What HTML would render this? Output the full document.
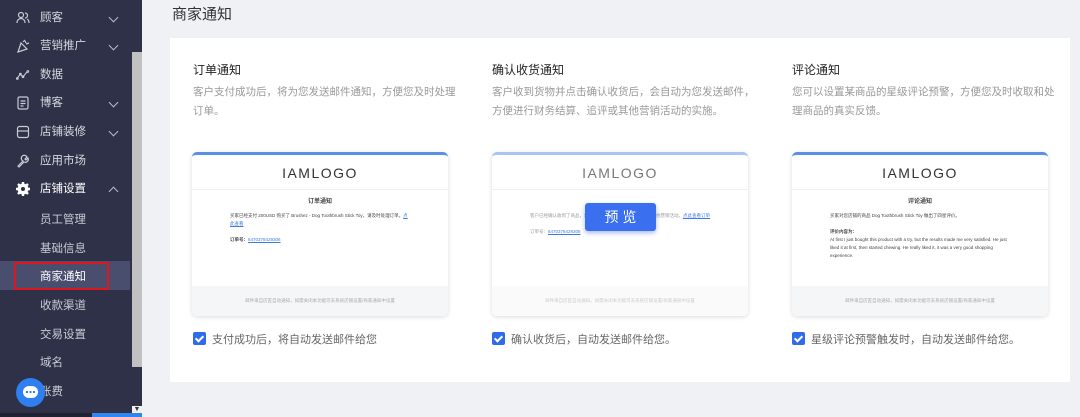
<!DOCTYPE html>
<html><head><meta charset="utf-8"><style>
*{margin:0;padding:0;box-sizing:border-box}
body{width:1080px;height:417px;overflow:hidden;background:#f0f1f5;font-family:"Liberation Sans","Noto Sans CJK SC",sans-serif;position:relative}
.sb{position:absolute;left:0;top:0;width:130px;height:417px;background:#2e3147}
.scr{position:absolute;left:130px;top:0;width:12px;height:417px;background:#2e3147}
.scr i{position:absolute;left:2px;top:52px;width:10px;height:315px;background:#c1c1c1}
.it{position:absolute;left:0;width:130px;height:28px;color:#d6d8e0;font-size:11.5px;line-height:28px}
.it .ic{position:absolute;left:16px;top:7px;width:14px;height:14px}
.it .t{position:absolute;left:40px}
.it .ar{position:absolute;left:110px;top:10px;width:7px;height:7px;border-right:1.5px solid #b8bbc8;border-bottom:1.5px solid #b8bbc8;transform:rotate(45deg)}
.it .up{transform:rotate(-135deg);top:13px}
.sub{position:absolute;left:40px;color:#c9cbd6;font-size:11.5px}
.sel{position:absolute;left:0;top:261px;width:130px;height:29px;background:#4a4e6e}
.red{position:absolute;left:14px;top:262px;width:95px;height:28px;border:2px solid #e0161e}
.panel{position:absolute;left:170px;top:38px;width:900px;height:344px;background:#fff}
h1{position:absolute;left:172px;top:3px;font-size:15px;font-weight:normal;color:#333}
.col{position:absolute;top:62px}
.col h3{font-size:12px;font-weight:normal;color:#222;line-height:16px}
.col p{margin-top:5px;font-size:10.5px;color:#999;line-height:19px}
.card{position:absolute;top:152px;width:256px;height:164px;border-radius:5px;background:#fff;box-shadow:0 1px 5px rgba(0,0,0,.15);border-top:3px solid #5b8fe6;overflow:hidden}
.logo{height:35px;border-bottom:1px solid #eef0f4;text-align:center;font-size:14px;letter-spacing:1.5px;line-height:36px;color:#333}
.cb{padding:8px 38px 0 38px;font-size:4.5px;color:#444;line-height:8px}
.cb .tt{text-align:center;font-size:6px;font-weight:bold;margin-bottom:6px}
.cb a{color:#3b7be8;text-decoration:underline}
.ft{position:absolute;left:0;bottom:0;width:100%;height:30px;background:#f5f6f8;font-size:4.5px;color:#aaa;text-align:center;line-height:30px}
.chk{position:absolute;top:332px;font-size:11px;color:#666;line-height:14px}
.chk b{display:inline-block;width:13px;height:13px;background:#2f6bea;border-radius:2px;vertical-align:-2px;margin-right:6px;position:relative}
.chk b:after{content:"";position:absolute;left:4px;top:1.5px;width:3px;height:6px;border-right:2px solid #fff;border-bottom:2px solid #fff;transform:rotate(45deg)}
.btn{position:absolute;left:585px;top:203px;width:71px;height:28px;background:#3a6ff0;border-radius:3px;color:#fff;font-size:14px;text-align:center;line-height:28px;box-shadow:0 2px 5px rgba(40,80,200,.4)}
</style></head><body>
<div class="sb">
<div class="it" style="top:4px"><svg class="ic" viewBox="0 0 14 14" fill="none" stroke="#c9cbd6" stroke-width="1.2"><circle cx="5" cy="4" r="2.5"/><path d="M1 12c0-3 2-4.5 4-4.5s4 1.5 4 4.5M9 2a2.5 2.5 0 010 5M11 8c1.5.7 2 2 2 4"/></svg><span class="t">顾客</span><span class="ar"></span></div>
<div class="it" style="top:32px"><svg class="ic" viewBox="0 0 14 14" fill="none" stroke="#c9cbd6" stroke-width="1.2"><path d="M2 13L5 4l6 6zM7 3l2-2M10 5l3-1M9 2l1 2"/></svg><span class="t">营销推广</span><span class="ar"></span></div>
<div class="it" style="top:61px"><svg class="ic" viewBox="0 0 16 14" fill="none" stroke="#c9cbd6" stroke-width="1.2"><path d="M1 11l4-5 3 3 5-6"/><circle cx="1.5" cy="11" r="1"/><circle cx="5" cy="6" r="1"/><circle cx="8" cy="9" r="1"/><circle cx="13.5" cy="3" r="1"/></svg><span class="t">数据</span></div>
<div class="it" style="top:89px"><svg class="ic" viewBox="0 0 14 14" fill="none" stroke="#c9cbd6" stroke-width="1.2"><rect x="2" y="1" width="10" height="12" rx="1.5"/><path d="M4.5 5h5M4.5 7.5h5M4.5 10h3"/></svg><span class="t">博客</span><span class="ar"></span></div>
<div class="it" style="top:118px"><svg class="ic" viewBox="0 0 14 14" fill="none" stroke="#c9cbd6" stroke-width="1.2"><rect x="1.5" y="1.5" width="11" height="11" rx="2"/><path d="M1.5 6h11"/></svg><span class="t">店铺装修</span><span class="ar"></span></div>
<div class="it" style="top:147px"><svg class="ic" viewBox="0 0 14 14" fill="none" stroke="#c9cbd6" stroke-width="1.2"><path d="M2 12l5-5a3 3 0 114-4l-2 2 1 1 2-2a3 3 0 01-4 4l-5 5z"/></svg><span class="t">应用市场</span></div>
<div class="it" style="top:175px;color:#fff"><svg class="ic" viewBox="0 0 14 14"><circle cx="7" cy="7" r="5.5" fill="#fff"/><g stroke="#fff" stroke-width="2.4"><path d="M7 0v14M0 7h14M2 2l10 10M12 2L2 12"/></g><circle cx="7" cy="7" r="2" fill="#2e3147"/></svg><span class="t">店铺设置</span><span class="ar up"></span></div>
<div class="sub" style="top:211px">员工管理</div>
<div class="sub" style="top:240px">基础信息</div>
<div class="sel"></div>
<div class="sub" style="top:268px;color:#fff">商家通知</div>
<div class="red"></div>
<div class="sub" style="top:297px">收款渠道</div>
<div class="sub" style="top:326px">交易设置</div>
<div class="sub" style="top:354px">域名</div>
<div class="sub" style="top:383px">账费</div>
<div style="position:absolute;left:16px;top:378px;width:29px;height:29px;border-radius:50%;background:#2f7ff0"><div style="position:absolute;left:7px;top:8px;width:15px;height:12px;border-radius:6px;background:#fff"></div><div style="position:absolute;left:10px;top:13px;width:9px;height:2px;background:linear-gradient(90deg,#2f7ff0 2px,#fff 2px,#fff 3.5px,#2f7ff0 3.5px,#2f7ff0 5.5px,#fff 5.5px,#fff 7px,#2f7ff0 7px)"></div></div>
</div>
<div class="scr"><i></i><div style="position:absolute;left:2px;top:406px;font-size:7px;color:#333;background:#f0f0f0;width:10px;height:11px;text-align:center">▼</div></div>
<div style="position:absolute;left:0;top:413px;width:92px;height:4px;background:#1f2233"></div>
<div style="position:absolute;left:92px;top:413px;width:50px;height:4px;background:#2f86f0"></div>
<h1>商家通知</h1>
<div class="panel"></div>
<div class="col" style="left:193px;width:264px"><h3>订单通知</h3><p>客户支付成功后，将为您发送邮件通知，方便您及时处理订单。</p></div>
<div class="col" style="left:492px;width:266px"><h3>确认收货通知</h3><p>客户收到货物并点击确认收货后，会自动为您发送邮件，方便进行财务结算、追评或其他营销活动的实施。</p></div>
<div class="col" style="left:792px;width:264px"><h3>评论通知</h3><p>您可以设置某商品的星级评论预警，方便您及时收取和处理商品的真实反馈。</p></div>
<div class="card" style="left:192px"><div class="logo">IAMLOGO</div><div class="cb"><div class="tt">订单通知</div>买家已经支付 200USD 购买了 Brushez - Dog Toothbrush Stick Toy，请及时处理订单。<a>点此查看</a><br><br><b>订单号：</b><a>6470378429306</a></div><div class="ft">邮件来自店匠自动通知，如需关闭本功能可去系统店铺设置/商家通知中设置</div></div>
<div class="card" style="left:492px;border-top-color:#a9c5f3"><div class="logo" style="color:#777">IAMLOGO</div><div class="cb" style="padding-top:22px;color:#999">客户已经确认收到了商品，您可以开始进行财务结算、追评或其他营销活动。<a>点此查看订单</a><br><br>订单号：<a>6470378429306</a></div><div class="ft" style="color:#ccc;background:#fafafb">邮件来自店匠自动通知，如需关闭本功能可去系统店铺设置/商家通知中设置</div></div>
<div class="btn">预 览</div>
<div class="card" style="left:792px"><div class="logo">IAMLOGO</div><div class="cb"><div class="tt">评论通知</div>买家对您店铺的商品 Dog Toothbrush Stick Toy 做出了四星评价。<br><br><b>评价内容为：</b><br>At first I just bought this product with a try, but the results made me very satisfied. He just liked it at first, then started chewing. He really liked it, it was a very good shopping experience.</div><div class="ft">邮件来自店匠自动通知，如需关闭本功能可去系统店铺设置/商家通知中设置</div></div>
<div class="chk" style="left:193px"><b></b>支付成功后，将自动发送邮件给您</div>
<div class="chk" style="left:492px"><b></b>确认收货后，自动发送邮件给您。</div>
<div class="chk" style="left:792px"><b></b>星级评论预警触发时，自动发送邮件给您。</div>
</body></html>
